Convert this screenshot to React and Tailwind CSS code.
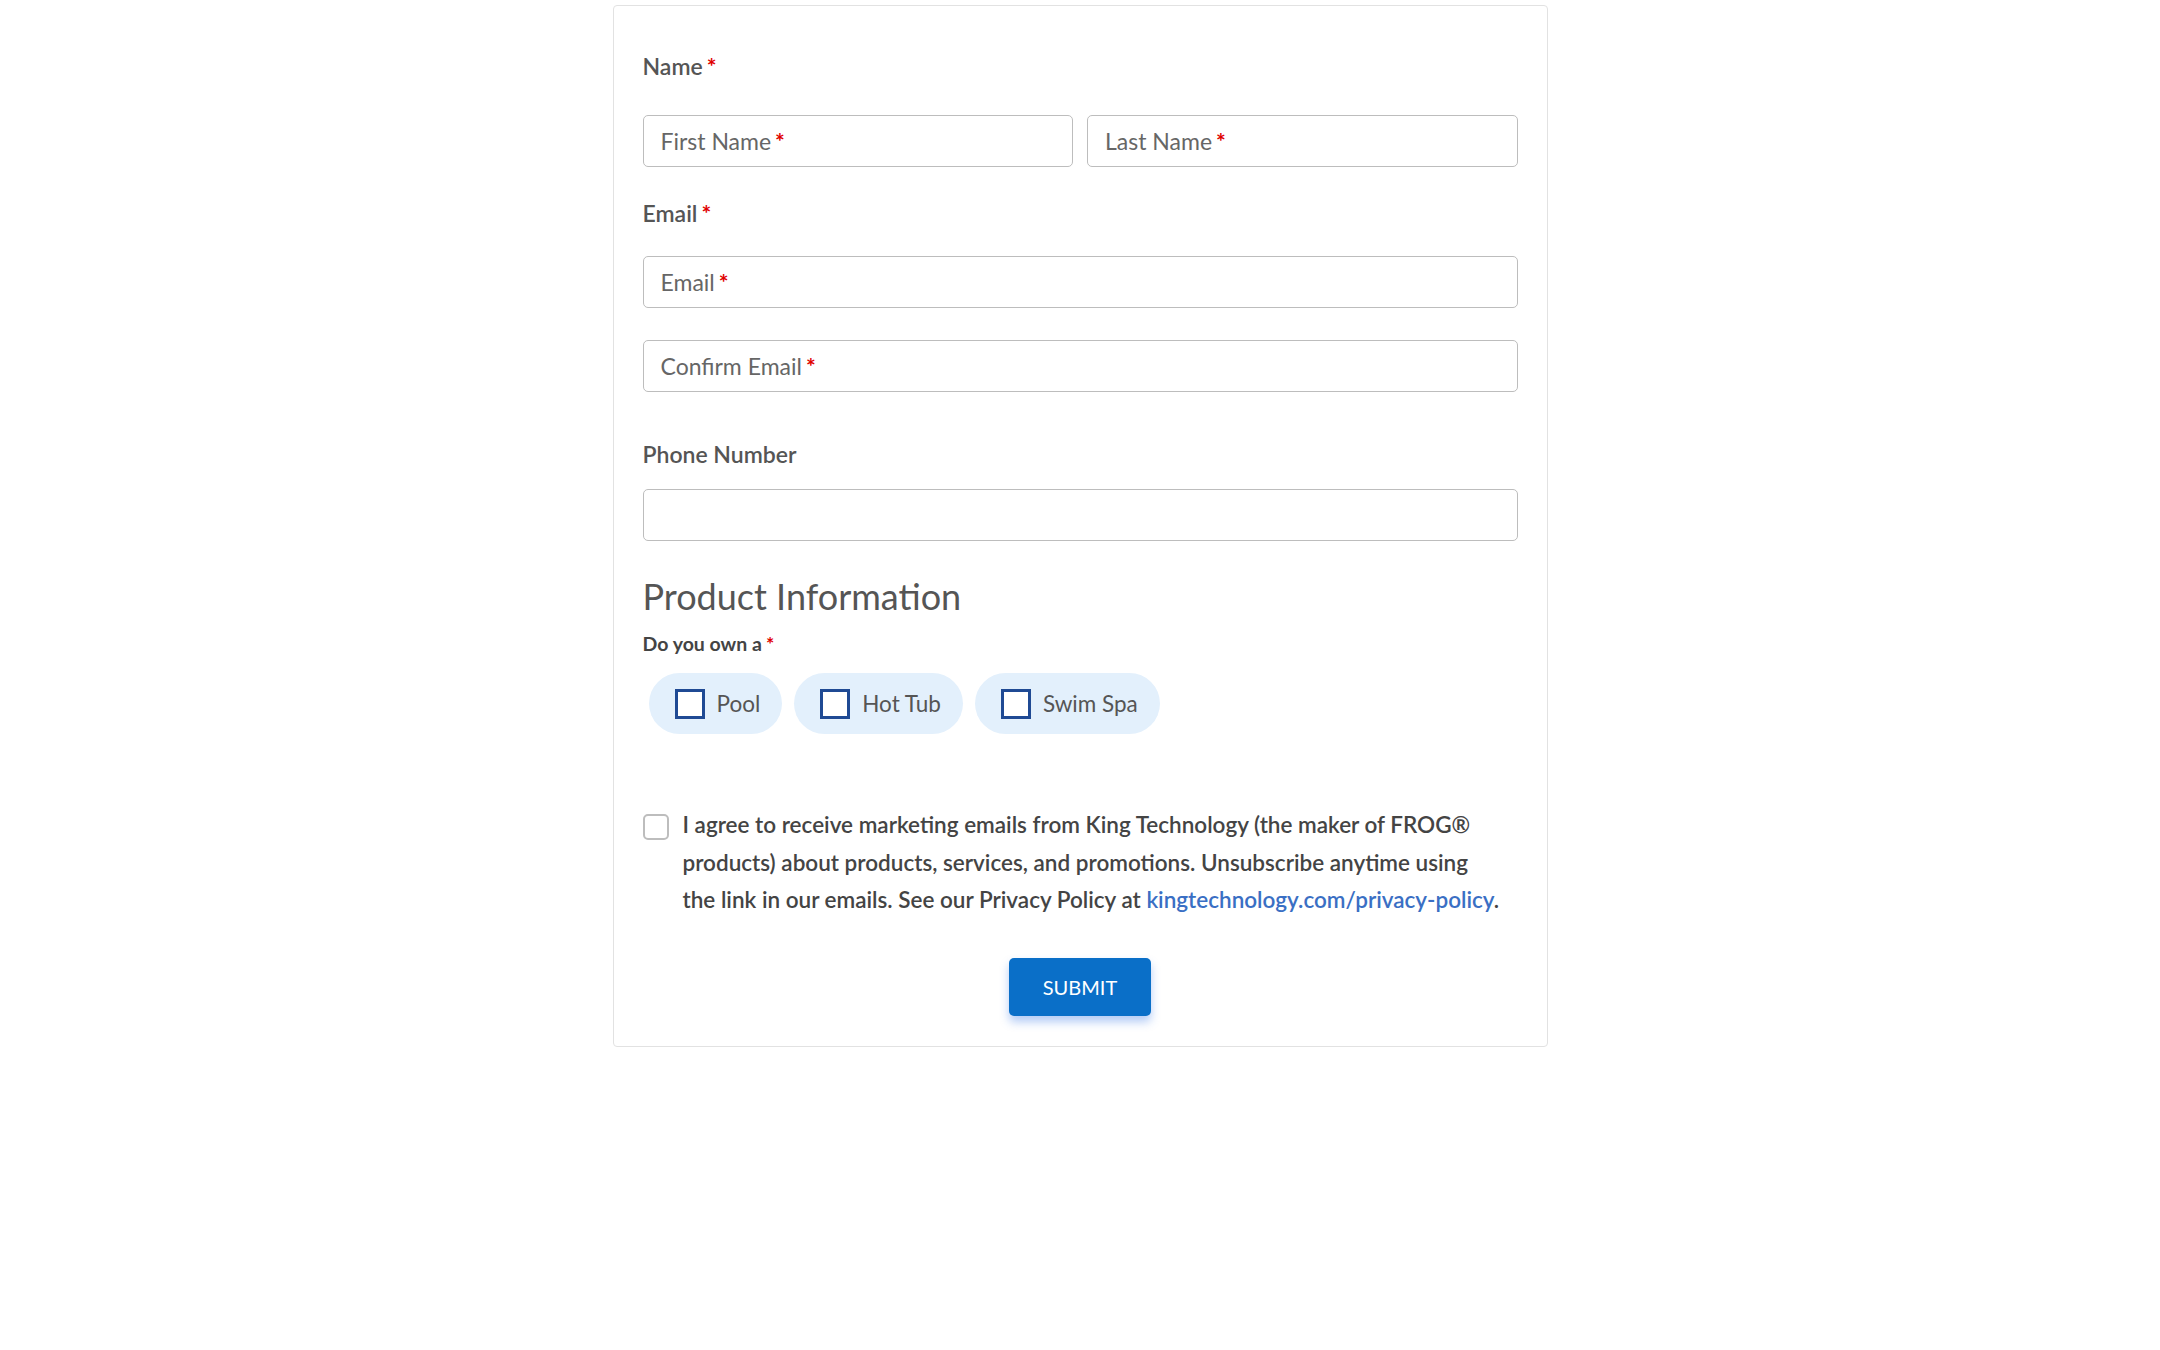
import React, { useState } from 'react';

const font = { fontFamily: '"Source Sans Pro", Lato, "Liberation Sans", sans-serif' };

const Req = () => <span className="ml-[4px] font-bold text-[#e00000]">*</span>;

const TextField = ({ placeholder, required }) => (
  <div className="relative h-[52px] w-full">
    <input
      type="text"
      className="h-full w-full rounded-[5px] border border-[#bdbdbd] bg-white px-[18px] text-[23px] text-[#555] outline-none"
    />
    {placeholder && (
      <span className="pointer-events-none absolute left-[18px] top-1/2 -translate-y-1/2 text-[23px] text-[#666]">
        {placeholder}
        {required && <Req />}
      </span>
    )}
  </div>
);

const Label = ({ children, required, className = '' }) => (
  <div className={`flex h-[36px] items-center text-[23px] font-semibold text-[#555] ${className}`}>
    <span>
      {children}
      {required && <Req />}
    </span>
  </div>
);

const Pill = ({ label, checked, onToggle }) => (
  <button
    type="button"
    onClick={onToggle}
    className="flex h-[61px] items-center gap-[12px] rounded-full bg-[#e3f0fc] pl-[26px] pr-[22px]"
  >
    <span className="flex h-[30px] w-[30px] items-center justify-center border-[3px] border-[#1f4a94] bg-white">
      {checked && <span className="h-[14px] w-[14px] bg-[#1f4a94]" />}
    </span>
    <span className="text-[22.5px] text-[#555]">{label}</span>
  </button>
);

export default function App() {
  const [owns, setOwns] = useState({ pool: false, hottub: false, swimspa: false });
  const [agree, setAgree] = useState(false);

  const toggle = (k) => setOwns((o) => ({ ...o, [k]: !o[k] }));

  return (
    <div className="min-h-screen bg-white pt-[5px]" style={font}>
      <div className="mx-auto w-[935px] rounded-[4px] border border-[#e2e2e2] px-[29px] pt-[42px] pb-[30px]">
        {/* Name */}
        <Label required>Name</Label>
        <div className="mt-[31px] grid grid-cols-2 gap-[14px]">
          <TextField placeholder="First Name" required />
          <TextField placeholder="Last Name" required />
        </div>

        {/* Email */}
        <Label required className="mt-[28px]">Email</Label>
        <div className="mt-[25px]">
          <TextField placeholder="Email" required />
        </div>
        <div className="mt-[32px]">
          <TextField placeholder="Confirm Email" required />
        </div>

        {/* Phone */}
        <Label className="mt-[44px]">Phone Number</Label>
        <div className="mt-[17px]">
          <TextField />
        </div>

        {/* Product info */}
        <h2 className="mt-[31px] flex h-[48px] items-center text-[36px] font-normal text-[#555]">
          Product Information
        </h2>
        <div className="mt-[11px] flex h-[26px] items-center text-[19.5px] font-bold text-[#444]">
          <span>
            Do you own a<Req />
          </span>
        </div>
        <div className="mt-[16px] flex gap-[12px] pl-[6px]">
          <Pill label="Pool" checked={owns.pool} onToggle={() => toggle('pool')} />
          <Pill label="Hot Tub" checked={owns.hottub} onToggle={() => toggle('hottub')} />
          <Pill label="Swim Spa" checked={owns.swimspa} onToggle={() => toggle('swimspa')} />
        </div>

        {/* Consent */}
        <div className="mt-[72px] flex gap-[14px]">
          <button
            type="button"
            onClick={() => setAgree(!agree)}
            className="mt-[8px] flex h-[26px] w-[26px] shrink-0 items-center justify-center rounded-[5px] border-2 border-[#bdbdbd] bg-white"
          >
            {agree && <span className="h-[12px] w-[12px] rounded-[2px] bg-[#0a6fc8]" />}
          </button>
          <p className="text-[22.5px] font-semibold leading-[37.5px] text-[#444]">
            I agree to receive marketing emails from King Technology (the maker of FROG®
            <br />
            products) about products, services, and promotions. Unsubscribe anytime using
            <br />
            the link in our emails. See our Privacy Policy at{' '}
            <a href="#" className="text-[#3a6fc4]">kingtechnology.com/privacy-policy</a>.
          </p>
        </div>

        {/* Submit */}
        <div className="mt-[39px] flex justify-center">
          <button
            type="submit"
            className="h-[58px] w-[142px] rounded-[5px] bg-[#0a6fc8] text-[20px] text-white shadow-[0_6px_10px_rgba(40,110,230,0.35)]"
          >
            SUBMIT
          </button>
        </div>
      </div>
    </div>
  );
}
